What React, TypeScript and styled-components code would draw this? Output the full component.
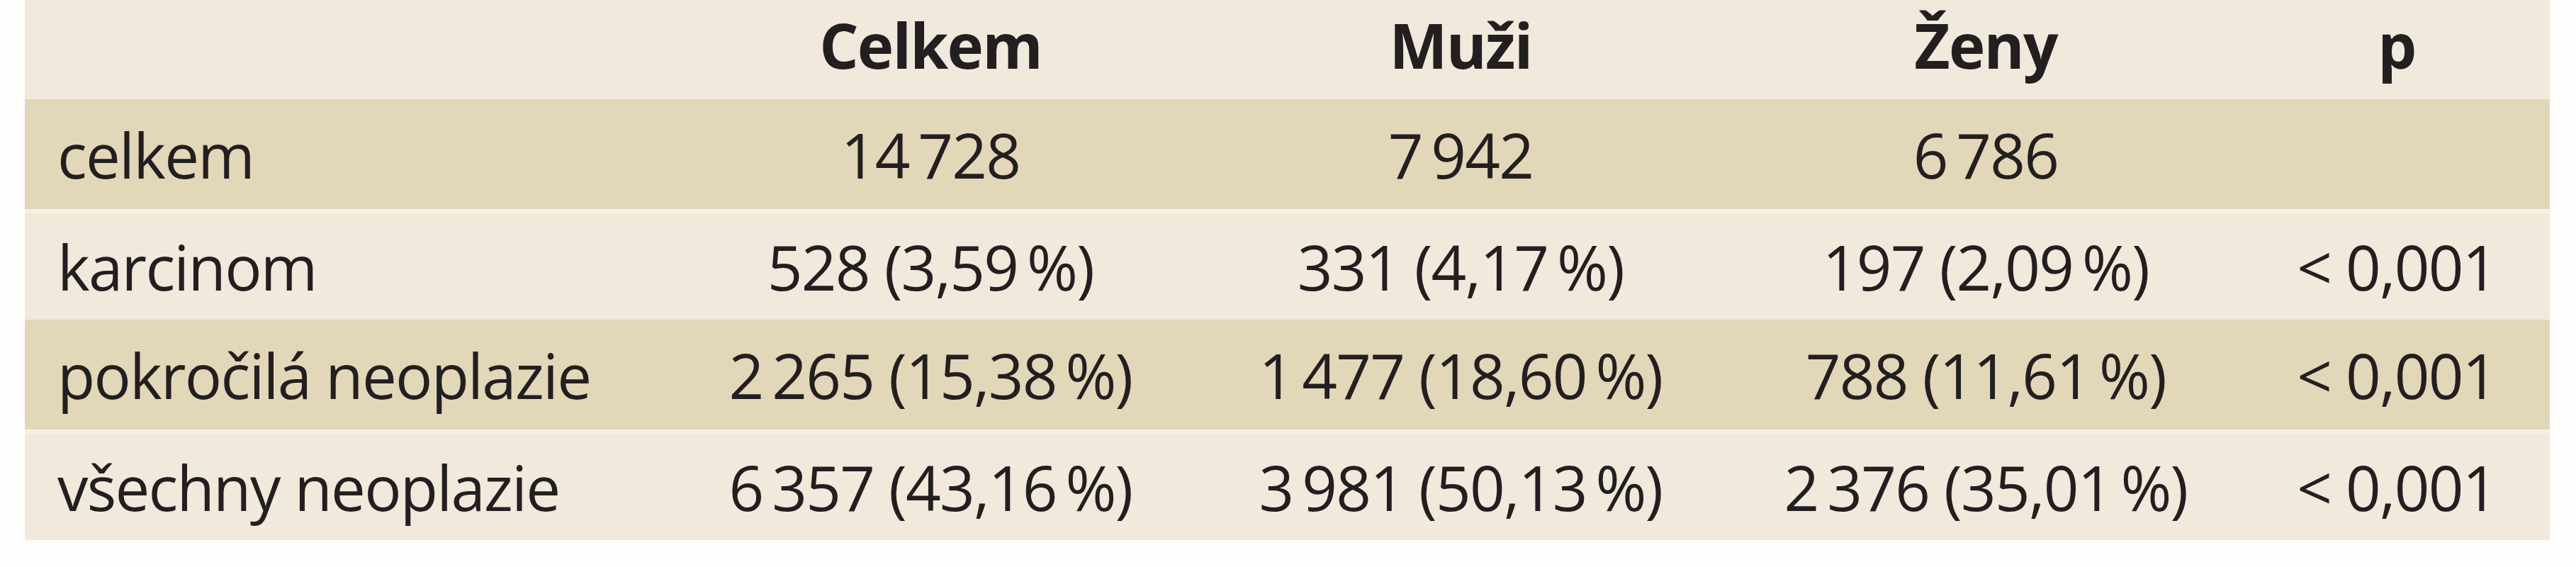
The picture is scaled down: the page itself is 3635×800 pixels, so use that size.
import React from 'react';
import styled, { createGlobalStyle } from 'styled-components';

const GlobalStyle = createGlobalStyle`
  html, body {
    margin: 0;
    padding: 0;
    background: #fefdfb;
  }
  body {
    font-family: "Open Sans", "Noto Sans", sans-serif;
    color: #231f20;
  }
`;

const Page = styled.div`
  width: 3635px;
  height: 800px;
  padding-left: 35px;
  box-sizing: border-box;
`;

const Table = styled.table`
  width: 3563px;
  border-collapse: collapse;
  table-layout: fixed;
  font-size: 87px;
  letter-spacing: -0.02em;
`;

const Col = styled.col<{ $w: number }>`
  width: ${(p) => p.$w}px;
`;

const HeadRow = styled.tr`
  background: #f0e9dc;
`;

const HeadCell = styled.th`
  height: 126px;
  padding: 0 0 14px;
  font-weight: 700;
  text-align: center;
  vertical-align: middle;
`;

const Row = styled.tr<{ $shade: boolean }>`
  background: ${(p) => (p.$shade ? '#e2d7b8' : '#f0e9dc')};
  border-top: ${(p) => (p.$shade ? '0' : '6px solid #f5f0e7')};
`;

const Cell = styled.td<{ $label?: boolean; $shade: boolean }>`
  height: ${(p) => (p.$shade ? 155 : 150)}px;
  padding: 0 0 0 ${(p) => (p.$label ? 46 : 0)}px;
  text-align: ${(p) => (p.$label ? 'left' : 'center')};
  vertical-align: middle;
  white-space: nowrap;
`;

const widths = [907, 742, 754, 728, 432];
const head = ['', 'Celkem', 'Muži', 'Ženy', 'p'];

const rows = [
  ['celkem', '14\u2009728', '7\u2009942', '6\u2009786', ''],
  ['karcinom', '528 (3,59\u2009%)', '331 (4,17\u2009%)', '197 (2,09\u2009%)', '< 0,001'],
  ['pokročilá neoplazie', '2\u2009265 (15,38\u2009%)', '1\u2009477 (18,60\u2009%)', '788 (11,61\u2009%)', '< 0,001'],
  ['všechny neoplazie', '6\u2009357 (43,16\u2009%)', '3\u2009981 (50,13\u2009%)', '2\u2009376 (35,01\u2009%)', '< 0,001'],
];

const App = () => {
  return (
    <>
      <GlobalStyle />
      <Page>
        <Table>
          <colgroup>
            {widths.map((w, i) => (
              <Col key={i} $w={w} />
            ))}
          </colgroup>
          <thead>
            <HeadRow>
              {head.map((h, i) => (
                <HeadCell key={i}>{h}</HeadCell>
              ))}
            </HeadRow>
          </thead>
          <tbody>
            {rows.map((r, i) => {
              const shade = i % 2 === 0;
              return (
                <Row key={i} $shade={shade}>
                  {r.map((c, j) => (
                    <Cell key={j} $label={j === 0} $shade={shade}>
                      {c}
                    </Cell>
                  ))}
                </Row>
              );
            })}
          </tbody>
        </Table>
      </Page>
    </>
  );
};

export default App;
